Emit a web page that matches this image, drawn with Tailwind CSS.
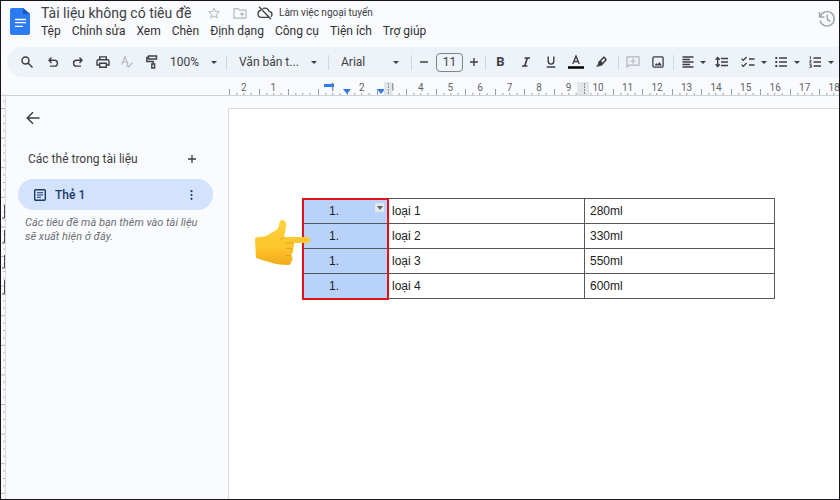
<!DOCTYPE html>
<html lang="vi">
<head>
    <meta charset="UTF-8">
    <meta name="viewport" content="width=device-width, initial-scale=1.0">
    <title>Tài liệu không có tiêu đề</title>
    <script src="https://cdn.jsdelivr.net/npm/@tailwindcss/browser@4"></script>
</head>
<body class="h-screen overflow-hidden border border-[#16151a] bg-[#fafbfe] font-[Roboto,sans-serif] text-[#3c4043] flex flex-col">
    <!-- title and menus -->
    <header class="flex h-[46px] shrink-0 pl-[9px] pr-[3px]">
        <svg class="mt-[7px] h-[27px] w-5 shrink-0" viewBox="0 0 20 27">
            <path fill="#2b7bf3" d="M2 0h11l7 6v19a2 2 0 0 1-2 2H2a2 2 0 0 1-2-2V2a2 2 0 0 1 2-2z"/>
            <path fill="#1557c0" d="M13 0l7 6h-7z"/>
            <path stroke="#fff" stroke-width="1.3" d="M5 11.5h11M5 14.7h11M5 18.3h8"/>
        </svg>
        <div class="ml-[11px] min-w-0 flex-1 pt-[2px]">
            <div class="flex h-5 items-center">
                <h1 class="w-[167px] whitespace-nowrap text-[14px] leading-5">Tài liệu không có tiêu đề</h1>
                <button aria-label="Gắn dấu sao" class="text-[#b4b7bb]">
                    <svg class="h-3 w-3" viewBox="0 0 24 24" fill="none" stroke="currentColor" stroke-width="2"><path d="M12 2l2.9 7 7.6.6-5.8 5 1.8 7.4L12 18l-6.500 4 1.800-7.400-5.800-5 7.600-.6z"/></svg>
                </button>
                <button aria-label="Di chuyển" class="ml-[13px] text-[#b4b7bb]">
                    <svg class="h-3 w-[14px]" viewBox="0 0 14 12" fill="none" stroke="currentColor" stroke-width="1.2"><path d="M1 1.600h4l1.500 1.500H13v8H1zM9 5v4.500M6.800 7.200h4.400"/></svg>
                </button>
                <button aria-label="Trạng thái" class="ml-[10px] flex items-center text-[10px] leading-4">
                    <svg class="mr-[6px] h-[14px] w-4" viewBox="0 0 16 14" fill="none" stroke="currentColor" stroke-width="1.300"><path d="M4 4.200C2.300 4.500 1 5.800 1 7.700c0 2 1.500 3.600 3.500 3.600h7M5.600 2.700c2.300-1.300 5.700-.4 6.400 2.700 1.800.2 3 1.300 3 3 0 1-.4 1.800-1.200 2.300M2 .8l12 12.500"/></svg>
                    Làm việc ngoại tuyến
                </button>
            </div>
            <nav class="flex h-4 gap-[11px] whitespace-nowrap text-[12px] leading-4 text-[#303134]">
                <button>Tệp</button>
                <button>Chỉnh sửa</button>
                <button>Xem</button>
                <button>Chèn</button>
                <button>Định dạng</button>
                <button>Công cụ</button>
                <button>Tiện ích</button>
                <button>Trợ giúp</button>
            </nav>
        </div>
        <button aria-label="Nhật ký phiên bản" class="mt-[9px] h-[18px] text-[#a4a7ab]">
            <svg class="h-[18px] w-[18px]" viewBox="0 0 18 18" fill="none" stroke="currentColor" stroke-width="1.500"><path d="M2.200 6.500A7.200 7.200 0 1 1 2 10.500M1.500 2v5h5M9.300 4.500v5l3.200 2"/></svg>
        </button>
    </header>

    <!-- toolbar -->
    <div class="ml-[6px] flex h-[30px] shrink-0 items-center overflow-hidden rounded-l-full bg-[#eef2f9] pl-[7px] text-[12px]" id="toolbar">
        <button aria-label="Tìm kiếm" class="flex w-[26px] shrink-0 justify-center"><svg class="h-3 w-3" viewBox="0 0 12 12" fill="none" stroke="currentColor" stroke-width="1.500"><circle cx="4.500" cy="4.500" r="3.500"/><path d="M7 7l4.500 4.500"/></svg></button>
        <button aria-label="Hoàn tác" class="flex w-[25px] shrink-0 justify-center"><svg class="h-3 w-3" viewBox="0 0 12 12" fill="none" stroke="currentColor" stroke-width="1.400"><path d="M4.500 1.500L2 4.200l2.500 2.700M2 4.200h5.500a2.900 2.900 0 0 1 0 5.900H3"/></svg></button>
        <button aria-label="Làm lại" class="flex w-[25px] shrink-0 justify-center"><svg class="h-3 w-3" viewBox="0 0 12 12" fill="none" stroke="currentColor" stroke-width="1.400"><path d="M7.500 1.500L10 4.200 7.500 6.900M10 4.200H4.500a2.900 2.900 0 0 0 0 5.900H9"/></svg></button>
        <button aria-label="In" class="flex w-[25px] shrink-0 justify-center"><svg class="h-3 w-[14px]" viewBox="0 0 14 12" fill="none" stroke="currentColor" stroke-width="1.400"><path d="M3.700 3.500V.9h6.600v2.600M3.500 9H1V5.300C1 4.300 1.700 3.700 2.600 3.700h8.800c.9 0 1.600.6 1.600 1.600V9h-2.500M3.700 7.200h6.600v4H3.700z"/></svg></button>
        <button aria-label="Kiểm tra chính tả" class="flex w-6 shrink-0 justify-center text-[#b3b6bb]"><svg class="h-3 w-3" viewBox="0 0 12 12" fill="none" stroke="currentColor" stroke-width="1.200"><path d="M.8 8.500L4 .8l3 7.700M2 6h4M5.500 9l2 2 4-4.300"/></svg></button>
        <button aria-label="Sao chép định dạng" class="flex w-[25px] shrink-0 justify-center"><svg class="h-[14px] w-3" viewBox="0 0 12 14" fill="none" stroke="currentColor" stroke-width="1.400"><path d="M2.500 1h8v3h-8zM2.500 2.500H.8v4h6.400v2.300M5.800 9h2.800v4H5.800z"/></svg></button>
        <button class="ml-[6px] flex w-[47px] shrink-0 items-center justify-between">100%<svg class="h-[3px] w-[6px]" viewBox="0 0 6 3" fill="currentColor"><path d="M0 0h6L3 3z"/></svg></button>
        <i class="ml-[9px] h-[15px] w-px shrink-0 bg-[#d2d6dd]"></i>
        <button class="ml-3 flex w-[78px] shrink-0 items-center justify-between whitespace-nowrap">Văn bản t...<svg class="h-[3px] w-[6px]" viewBox="0 0 6 3" fill="currentColor"><path d="M0 0h6L3 3z"/></svg></button>
        <i class="ml-[11px] h-[15px] w-px shrink-0 bg-[#d2d6dd]"></i>
        <button class="ml-3 flex w-[58px] shrink-0 items-center justify-between">Arial<svg class="h-[3px] w-[6px]" viewBox="0 0 6 3" fill="currentColor"><path d="M0 0h6L3 3z"/></svg></button>
        <i class="ml-3 h-[15px] w-px shrink-0 bg-[#d2d6dd]"></i>
        <button aria-label="Giảm cỡ chữ" class="flex w-6 shrink-0 justify-center"><svg class="h-3 w-[10px]" viewBox="0 0 10 12" stroke="currentColor" stroke-width="1.400"><path d="M1 6h8"/></svg></button>
        <input aria-label="Cỡ chữ" value="11" class="h-[19px] w-[27px] shrink-0 rounded border border-[#80868b] text-center text-[12px]">
        <button aria-label="Tăng cỡ chữ" class="flex w-[22px] shrink-0 justify-center"><svg class="h-3 w-[10px]" viewBox="0 0 10 12" stroke="currentColor" stroke-width="1.400"><path d="M1 6h8M5 2v8"/></svg></button>
        <i class="h-[15px] w-px shrink-0 bg-[#d2d6dd]"></i>
        <button aria-label="Đậm" class="ml-[2px] w-[25px] shrink-0 text-center text-[13px] font-bold">B</button>
        <button aria-label="Nghiêng" class="flex w-[25px] shrink-0 justify-center"><svg class="h-3 w-[10px]" viewBox="0 0 10 12" fill="none" stroke="currentColor" stroke-width="1.700"><path d="M3.500 2h5.500M1 10h5.500M6.300 2l-2.600 8"/></svg></button>
        <button aria-label="Gạch chân" class="flex w-[25px] shrink-0 justify-center"><svg class="h-3 w-[10px]" viewBox="0 0 10 12" fill="none" stroke="currentColor" stroke-width="1.400"><path d="M2.200.5v4.800a2.800 2.800 0 0 0 5.600 0V.5M.7 11h8.600"/></svg></button>
        <button aria-label="Màu văn bản" class="flex w-[25px] shrink-0 justify-center"><svg class="h-[14px] w-4" viewBox="0 0 16 14" fill="none" stroke="currentColor" stroke-width="1.400"><path d="M4.800 9L8 1l3.200 8M5.800 6.500h4.400"/><path stroke="#000" stroke-width="2.500" d="M0 12.500h16"/></svg></button>
        <button aria-label="Màu đánh dấu" class="flex w-[26px] shrink-0 justify-center"><svg class="h-3 w-3" viewBox="0 0 12 12"><path fill="currentColor" fill-rule="evenodd" d="M8.300.8L3 6.200 3.200 8 1 10.500h3.200l.7-.7 1.500.1L11.500 4.500c.4-.4.4-1 0-1.400L9.800.8c-.5-.4-1.100-.4-1.500 0zM9 2.200l1.200 1.500-2.700 2.700L6.200 5z"/></svg></button>
        <i class="ml-1 h-[15px] w-px shrink-0 bg-[#d2d6dd]"></i>
        <button aria-label="Thêm nhận xét" class="ml-px flex w-[25px] shrink-0 justify-center text-[#b3b6bb]"><svg class="h-3 w-[14px]" viewBox="0 0 14 12" fill="none" stroke="currentColor" stroke-width="1.200"><path d="M1 11V.8h12v8.400H3zM7 2.500v5M4.500 5h5"/></svg></button>
        <button aria-label="Chèn hình ảnh" class="flex w-[25px] shrink-0 justify-center"><svg class="h-3 w-3" viewBox="0 0 12 12" fill="none" stroke="currentColor" stroke-width="1.300"><rect x=".9" y=".9" width="10.200" height="10.200" rx="1"/><path fill="currentColor" stroke="none" d="M2.500 9.500l1.800-2.500 1.200 1.500 2-2.500 2.300 3.500z"/></svg></button>
        <i class="ml-[3px] h-[15px] w-px shrink-0 bg-[#d2d6dd]"></i>
        <button aria-label="Căn chỉnh" class="ml-2 flex w-6 shrink-0 items-center justify-between"><svg class="h-3 w-3" viewBox="0 0 12 12" stroke="currentColor" stroke-width="1.300"><path d="M.5 1h11M.5 3.500h7.500M.5 6h11M.5 8.500h7.500M.5 11h11"/></svg><svg class="h-[3px] w-[6px]" viewBox="0 0 6 3" fill="currentColor"><path d="M0 0h6L3 3z"/></svg></button>
        <button aria-label="Giãn dòng" class="ml-[9px] flex w-[14px] shrink-0 justify-center"><svg class="h-3 w-[14px]" viewBox="0 0 14 12" fill="none" stroke="currentColor" stroke-width="1.400"><path d="M6 2.500h7M6 6h7M6 9.500h7M2.700 2v8M.6 3.700l2.100-2.100 2.100 2.100M.6 8.300l2.100 2.100 2.100-2.100"/></svg></button>
        <button aria-label="Danh sách kiểm" class="ml-3 flex w-[26px] shrink-0 items-center justify-between"><svg class="h-3 w-[14px]" viewBox="0 0 14 12" fill="none" stroke="currentColor" stroke-width="1.300"><path d="M8 3h5.500M8 9h5.500M.6 2.700l1.700 1.700L5.600 1M.6 8.700l1.700 1.700L5.600 7"/></svg><svg class="h-[3px] w-[6px]" viewBox="0 0 6 3" fill="currentColor"><path d="M0 0h6L3 3z"/></svg></button>
        <button aria-label="Danh sách dấu đầu dòng" class="ml-2 flex w-[25px] shrink-0 items-center justify-between"><svg class="h-3 w-3" viewBox="0 0 12 12" stroke="currentColor" stroke-width="1.300"><path d="M4 2h8M4 6h8M4 10h8"/><path stroke-width="2" d="M.3 2h2M.3 6h2M.3 10h2"/></svg><svg class="h-[3px] w-[6px]" viewBox="0 0 6 3" fill="currentColor"><path d="M0 0h6L3 3z"/></svg></button>
        <button aria-label="Danh sách đánh số" class="ml-[9px] flex w-[25px] shrink-0 items-center justify-between"><svg class="h-3 w-3" viewBox="0 0 12 12" fill="none" stroke="currentColor" stroke-width="1.300"><path d="M4.500 2H12M4.500 6H12M4.500 10H12"/><path stroke-width=".9" d="M.5.800h1v2.500M.3 4.700h2L.5 7h2M.3 8.700h2v2.600h-2M1 10h1.300"/></svg><svg class="h-[3px] w-[6px]" viewBox="0 0 6 3" fill="currentColor"><path d="M0 0h6L3 3z"/></svg></button>
    </div>

    <!-- horizontal ruler -->
    <div class="relative mt-1 h-[15px] shrink-0 overflow-hidden border-b border-[#cfd1d4] pl-[228px]">
        <div class="grid h-full w-[620px] grid-cols-21 text-center text-[10px] leading-3 text-[#5f6368]" id="ruler"></div>
        <svg class="absolute left-[322px] top-0 h-[14px] w-[74px]" viewBox="0 0 74 14">
            <path fill="#2f7de9" d="M1 3h10v3H1zM20 8h8l-4 5zM54 8h8l-4 5z"/>
            <path fill="#e4e5e7" d="M61 1h8v13h-8z"/>
            <path stroke="#8b8e92" stroke-dasharray="2 1" d="M65.500 2v11"/>
        </svg>
        <svg class="absolute left-[576px] top-0 h-[14px] w-3" viewBox="0 0 12 14">
            <path fill="#e4e5e7" d="M0 1h12v13H0z"/>
            <path stroke="#8b8e92" stroke-dasharray="2 1" d="M7.500 2v11"/>
        </svg>
    </div>

    <div class="flex min-h-0 flex-1">
        <!-- vertical ruler -->
        <svg class="h-full w-1 shrink-0" fill="none">
            <defs>
                <pattern id="ticks" width="4" height="29.600" y="12" patternUnits="userSpaceOnUse">
                    <path stroke="#b4b6ba" d="M0 .5h4M2 7.900h2M2 15.300h2M2 22.700h2"/>
                </pattern>
            </defs>
            <rect width="4" height="100%" fill="url(#ticks)"/>
            <path stroke="#4a4c50" d="M3.500 109v13H1M3.500 134v13H1M3.500 159v13H1M3.500 184v14H1"/>
        </svg>

        <!-- document tabs -->
        <aside class="w-[223px] shrink-0 border-l border-[#d9dbde] pl-3 pr-[15px] pt-[15px]">
            <button aria-label="Quay lại" class="ml-2 block"><svg class="h-[14px] w-[14px]" viewBox="0 0 14 14" fill="none" stroke="currentColor" stroke-width="1.500"><path d="M13.500 7H1.500M7 1.200L1.300 7 7 12.800"/></svg></button>
            <div class="mt-6 flex h-5 items-center justify-between pl-[10px] pr-4">
                <h2 class="text-[12px] leading-5">Các thẻ trong tài liệu</h2>
                <button aria-label="Thêm thẻ"><svg class="h-[10px] w-[10px]" viewBox="0 0 10 10" stroke="currentColor" stroke-width="1.300"><path d="M1 5h8M5 1v8"/></svg></button>
            </div>
            <div class="mt-[10px] flex h-[31px] items-center rounded-full bg-[#d3e3fd] pl-4 pr-5 text-[#1b3a6b]">
                <svg class="h-3 w-3" viewBox="0 0 12 12" fill="none" stroke="currentColor" stroke-width="1.400"><rect x=".7" y=".7" width="10.600" height="10.600" rx="1"/><path stroke-width="1.100" d="M3 3.700h6M3 6h6M3 8.300h4"/></svg>
                <a href="#" class="ml-[9px] flex-1 text-[12px] font-medium">Thẻ 1</a>
                <button aria-label="Tùy chọn thẻ"><svg class="h-[10px] w-[3px]" viewBox="0 0 3 10" fill="currentColor"><circle cx="1.500" cy="1.200" r="1.100"/><circle cx="1.500" cy="5" r="1.100"/><circle cx="1.500" cy="8.800" r="1.100"/></svg></button>
            </div>
            <p class="mt-[6px] whitespace-nowrap pl-[7px] text-[11px] italic leading-[14px] text-[#6b6f74]">Các tiêu đề mà bạn thêm vào tài liệu<br>sẽ xuất hiện ở đây.</p>
        </aside>

        <!-- page -->
        <main class="mt-3 min-w-0 flex-1 border-l border-t border-[#d9dbde] bg-white pl-[74px] pr-16 pt-[89px] font-['Liberation_Sans',sans-serif] text-[12px] text-[#202124]">
            <div class="relative">
                <table class="w-full table-fixed border-collapse">
                    <colgroup><col class="w-[84px]"><col class="w-[197px]"><col></colgroup>
                    <tbody id="rows"></tbody>
                </table>
                <div class="pointer-events-none absolute -left-px top-0 h-[102px] w-[87px] border-2 border-[#e0131c]"></div>
                <svg class="absolute -left-12 top-[20px] h-12 w-[58px]" viewBox="0 0 58 48">
                    <defs>
                        <linearGradient id="skin" x2="0" y2="1">
                            <stop offset="0" stop-color="#ffd23c"/>
                            <stop offset=".6" stop-color="#fdc62c"/>
                            <stop offset="1" stop-color="#f2a91c"/>
                        </linearGradient>
                    </defs>
                    <path fill="url(#skin)" d="M0 22c0-2 1-3 3-3 6 0 9-1 13-4 4-2 7-4 8-7 0-3 1-6 3-6 3 0 5 3 4 7l-2 10h23c4 0 4 6 0 6H38c2 2 1 4 0 5 1 3 0 5-2 7 2 3 2 5 0 7 0 2-1 3-3 3-7 0-14-1-19-3-5-1-9-3-13-4z"/>
                    <path fill="none" stroke="#e39a17" stroke-width=".8" d="M39 25h-9M38 30.500h-7M36.500 37.500H31M30 19.500c-2 0-4 1-5 3"/>
                </svg>
            </div>
        </main>
    </div>

    <script>
        const ruler = document.getElementById("ruler");
        for (let i = -2; i <= 18; i++) {
            ruler.innerHTML += `<div class="relative flex justify-center pt-px">
                ${i === 0 ? "" : Math.abs(i)}
                <svg class="absolute bottom-0 left-0 h-[6px] w-full" viewBox="0 0 30 6" preserveAspectRatio="none"><path stroke="#9a9da1" d="M.5 0v6M8 4v2M15 4v2M22.500 4v2"/></svg>
            </div>`;
        }

        const items = [["loại 1", "280ml"], ["loại 2", "330ml"], ["loại 3", "550ml"], ["loại 4", "600ml"]];
        document.getElementById("rows").innerHTML = items.map(([name, size], i) => `
            <tr class="h-[25px]">
                <td class="relative border border-[#55575a] bg-[#b9d2fb] pl-[25px]">1.${i === 0 ? `<button aria-label="Tùy chọn bảng" class="absolute right-[3px] top-1 flex h-[9px] w-[9px] items-center justify-center bg-[#e6e7ea]"><svg class="h-1 w-[6px]" viewBox="0 0 6 4" fill="#5f6368"><path d="M0 0h6L3 4z"/></svg></button>` : ""}</td>
                <td class="border border-[#55575a] pl-1">${name}</td>
                <td class="border border-[#55575a] pl-[5px]">${size}</td>
            </tr>`).join("");
    </script>
</body>
</html>
